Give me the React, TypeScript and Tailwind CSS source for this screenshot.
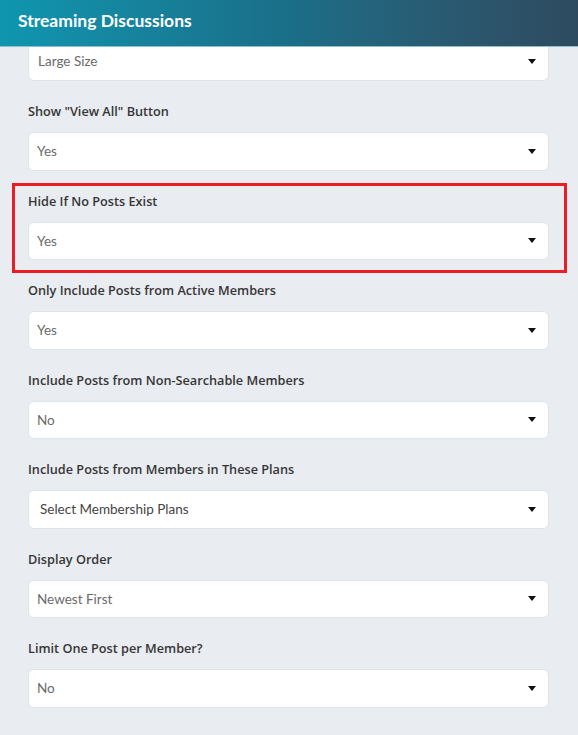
import React from "react";

const fields: { label: string; value: string; highlight?: boolean; select2?: boolean }[] = [
  { label: 'Show "View All" Button', value: "Yes" },
  { label: "Hide If No Posts Exist", value: "Yes", highlight: true },
  { label: "Only Include Posts from Active Members", value: "Yes" },
  { label: "Include Posts from Non-Searchable Members", value: "No" },
  { label: "Include Posts from Members in These Plans", value: "Select Membership Plans", select2: true },
  { label: "Display Order", value: "Newest First" },
  { label: "Limit One Post per Member?", value: "No" },
];

function Caret() {
  return (
    <svg width="8" height="5" viewBox="0 0 8 5" className="shrink-0">
      <path d="M0 0 L8 0 L4 5 Z" fill="#111" />
    </svg>
  );
}

export default function App() {
  return (
    <div
      className="w-[578px] h-[735px] overflow-hidden bg-[#e9ecf1] flex flex-col"
      style={{ fontFamily: "Lato, 'Noto Sans', sans-serif" }}
    >
      <div className="h-[47px] shrink-0 flex items-center px-[18px] bg-gradient-to-r from-[#0f96b0] via-[#1a6e88] to-[#2e4a5f] border-b border-[#8fbfcc]">
        <h1 className="text-white text-[17.5px] font-bold leading-none -mt-[5px]">
          Streaming Discussions
        </h1>
      </div>
      <div className="flex flex-col px-[28px] pr-[29px]">
        <div className="h-[34px] bg-white rounded-b-[6px] border border-t-0 border-[#e0e3e8] flex items-center justify-between pl-[9px] pr-[12px]">
          <span className="text-[13.5px] text-[#6a6a6a] -mt-[4px]">Large Size</span>
          <span className="-mt-[4px]"><Caret /></span>
        </div>
        {fields.map((f) => (
          <div key={f.label} className="relative flex flex-col pt-[20px]">
            {f.highlight && (
              <div className="absolute left-[-16px] right-[-18px] top-[12px] bottom-[-13px] border-[3px] border-[#ec1c24] pointer-events-none" />
            )}
            <div
              className="h-[20px] leading-[20px] text-[12.7px] font-semibold text-[#363636]"
              style={{ fontFamily: "'Open Sans', 'Noto Sans', sans-serif" }}
            >
              {f.label}
            </div>
            <div
              className="mt-[11px] h-[38.5px] bg-white rounded-[6px] border border-[#e0e3e8] flex items-center justify-between pr-[12px]"
              style={{ paddingLeft: f.select2 ? 11 : 8 }}
            >
              <span className={f.select2 ? "text-[13.5px] text-[#444]" : "text-[13.5px] text-[#6a6a6a]"}>{f.value}</span>
              <Caret />
            </div>
          </div>
        ))}
      </div>
    </div>
  );
}
